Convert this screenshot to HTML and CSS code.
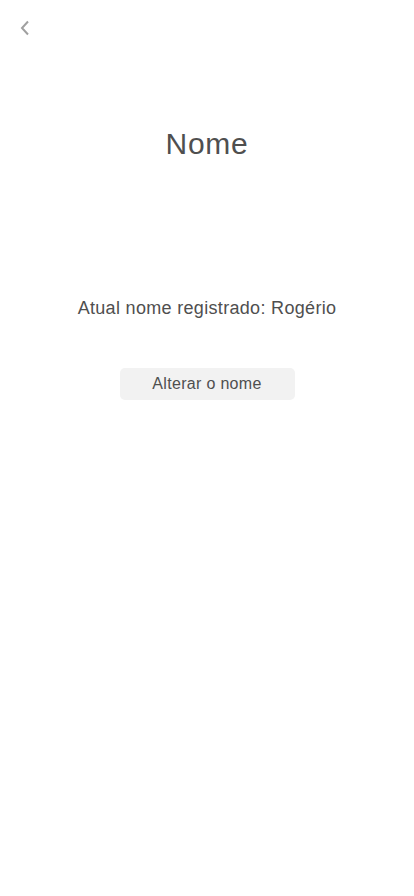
FILE: index.html
```html
<!DOCTYPE html>
<html lang="pt">
<head>
<meta charset="utf-8">
<link rel="stylesheet" href="styles.css">
</head>
<body>
<div class="page">
  <header class="topbar">
    <button class="back" aria-label="Voltar">
      <svg width="10" height="16" viewBox="0 0 10 16"><path d="M8 1.5 L2 8 L8 14.5" fill="none" stroke="#a0a0a0" stroke-width="2"/></svg>
    </button>
  </header>
  <h1 class="title">Nome</h1>
  <p class="current">Atual nome registrado: Rogério</p>
  <button class="change">Alterar o nome</button>
</div>
</body>
</html>
```
FILE: styles.css
```css
html, body { margin: 0; padding: 0; background: #fff; }
body { font-family: "Liberation Sans", Arial, sans-serif; color: #4f4f4f; letter-spacing: 0.02em; }
.page { width: 414px; min-height: 896px; display: flex; flex-direction: column; align-items: center; }
.topbar { align-self: stretch; height: 56px; padding: 20px 0 0 20px; box-sizing: border-box; }
.back { border: 0; background: none; padding: 0; width: 10px; height: 16px; display: block; cursor: pointer; }
.back svg { display: block; }
.title { margin: 70px 0 0; font-size: 30px; font-weight: normal; line-height: 36px; color: #4f4f4f; letter-spacing: 0.025em; }
.current { margin: 135px 0 0; font-size: 18px; line-height: 22px; color: #4f4f4f; }
.change { margin-top: 49px; width: 175px; height: 32px; border: 0; border-radius: 5px; background: #f2f2f2; font-family: inherit; font-size: 16px; color: #4f4f4f; letter-spacing: 0.02em; cursor: pointer; }
```
